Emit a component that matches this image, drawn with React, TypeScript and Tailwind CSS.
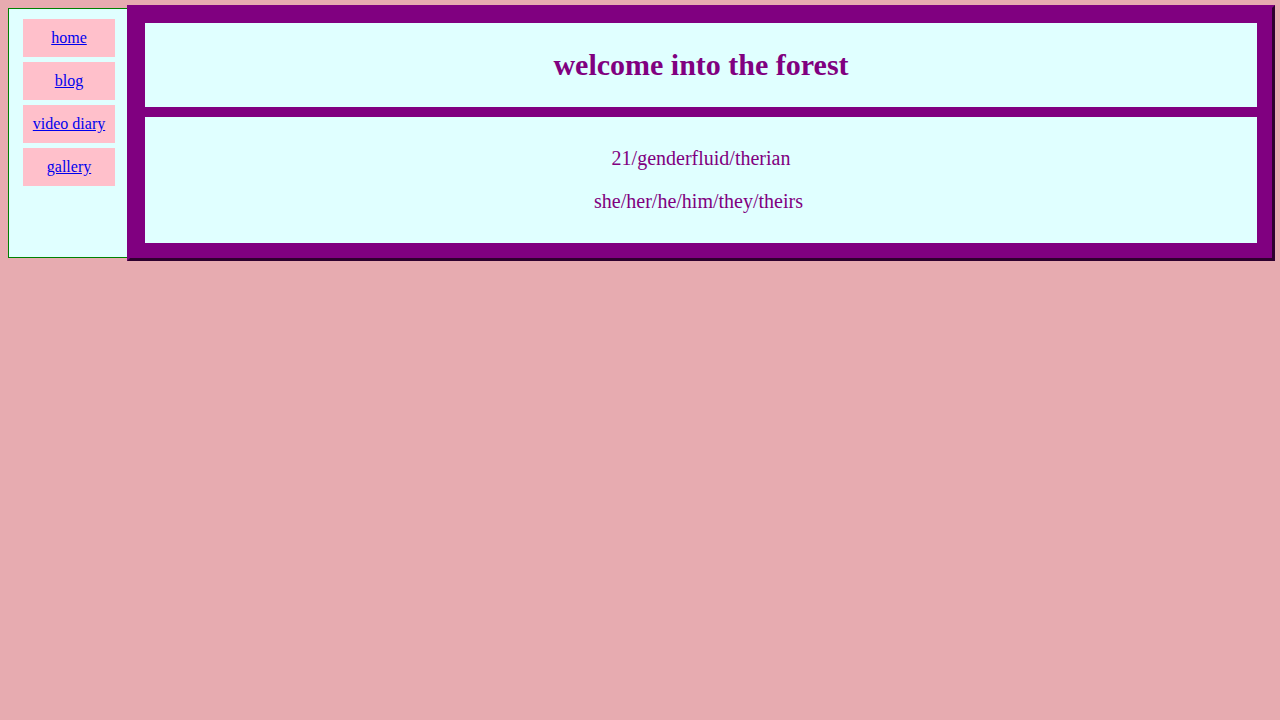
import React from "react";

const navItems = ["home", "blog", "video diary", "gallery"];

export default function App() {
  return (
    <div
      className="min-h-screen w-full bg-[#e7abb0] flex flex-row items-start"
      style={{ fontFamily: '"Liberation Serif", "Times New Roman", serif' }}
    >
      <div className="ml-[8px] mt-[8px] w-[120px] h-[250px] shrink-0 border border-[#008000] bg-[#e0ffff] pt-[10px] pl-[14px] flex flex-col gap-[5px]">
        {navItems.map((item) => (
          <div
            key={item}
            className="w-[92px] h-[38px] bg-[#ffc0cb] flex items-center justify-center"
          >
            <a href="#" className="text-[16px] leading-[18px] text-[#0000ee] underline">
              {item}
            </a>
          </div>
        ))}
      </div>
      <div className="relative mt-[5px] ml-[-1px] w-[1148px] shrink-0 bg-[#800080] border-[3px] border-t-[#800080] border-l-[#800080] border-r-[#2e002e] border-b-[#2e002e] p-[15px] flex flex-col gap-[10px]">
        <div className="h-[84px] bg-[#e0ffff] flex items-center justify-center">
          <h1 className="text-[30px] leading-[34px] font-bold text-[#800080]">
            welcome into the forest
          </h1>
        </div>
        <div className="bg-[#e0ffff] py-[30px] flex flex-col items-center gap-[20px] text-[20px] leading-[23px] text-[#800080]">
          <p>21/genderfluid/therian</p>
          <p className="mr-[5px]">she/her/he/him/they/theirs</p>
        </div>
      </div>
    </div>
  );
}
